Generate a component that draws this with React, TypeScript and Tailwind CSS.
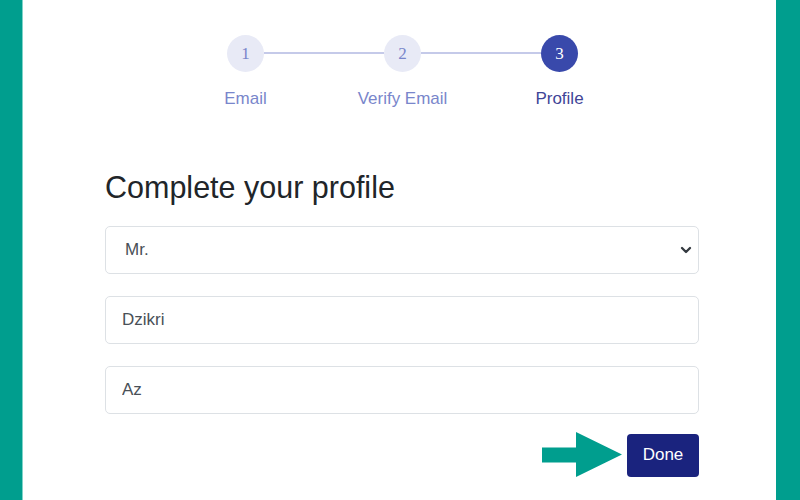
import { ChevronDown } from "lucide-react";

const steps = [
  { n: 1, label: "Email", active: false },
  { n: 2, label: "Verify Email", active: false },
  { n: 3, label: "Profile", active: true },
];

const Stepper = () => {
  return (
    <div className="flex items-start justify-center pt-[35px] pl-[6px]">
      {steps.map((s, i) => (
        <div key={s.n} className="flex items-start">
          <div className="flex flex-col items-center w-[37px]">
            <div
              className={
                s.active
                  ? "w-[37px] h-[37px] rounded-full bg-[#3949ab] text-white flex items-center justify-center text-[17px] font-['Liberation_Serif',serif]"
                  : "w-[37px] h-[37px] rounded-full bg-[#e8eaf6] text-[#7986cb] flex items-center justify-center text-[17px] font-['Liberation_Serif',serif]"
              }
            >
              {s.n}
            </div>
            <div
              className={
                s.active
                  ? "mt-[17px] leading-[20px] text-[17px] whitespace-nowrap text-[#3f4597]"
                  : "mt-[17px] leading-[20px] text-[17px] whitespace-nowrap text-[#7986cb]"
              }
            >
              {s.label}
            </div>
          </div>
          {i < steps.length - 1 && (
            <div className="w-[120px] h-[2px] mt-[17px] bg-[#c5cae9]" />
          )}
        </div>
      ))}
    </div>
  );
};

const App = () => {
  return (
    <div className="w-full h-[500px] flex bg-[#009e8e] font-['Liberation_Sans',Arial,sans-serif] overflow-hidden">
      <div className="w-[23px] border-r border-[#7fd3c8]" />
      <div className="flex-1 bg-white">
        <Stepper />
        <div className="ml-[82px] w-[594px] mt-[60px]">
          <h1 className="text-[30.5px] leading-[36px] text-[#212529]">
            Complete your profile
          </h1>
          <div className="relative mt-[21px]">
            <select className="w-full h-[48px] appearance-none rounded-[5px] border border-[#dde1e5] bg-white pl-[19px] text-[17px] text-[#495057] outline-none">
              <option>Mr.</option>
              <option>Mrs.</option>
              <option>Ms.</option>
            </select>
            <ChevronDown
              className="absolute right-[5px] top-[16px] w-[16px] h-[16px] text-[#343a40] pointer-events-none"
              strokeWidth={3.5}
            />
          </div>
          <input
            defaultValue="Dzikri"
            className="mt-[22px] w-full h-[48px] rounded-[5px] border border-[#dde1e5] px-[16px] text-[17px] text-[#495057] outline-none"
          />
          <input
            defaultValue="Az"
            className="mt-[22px] w-full h-[48px] rounded-[5px] border border-[#dde1e5] px-[16px] text-[17px] text-[#495057] outline-none"
          />
          <div className="mt-[18px] flex items-center justify-end gap-[5px]">
            <svg width="80" height="46" viewBox="0 0 80 46">
              <polygon
                points="0,15.5 34,15.5 34,0 80,22.5 34,45 34,30.5 0,30.5"
                fill="#009e8e"
              />
            </svg>
            <button className="w-[72px] h-[43px] rounded-[4px] bg-[#1a237e] text-white text-[17px]">
              Done
            </button>
          </div>
        </div>
      </div>
      <div className="w-[24px]" />
    </div>
  );
};

export default App;
